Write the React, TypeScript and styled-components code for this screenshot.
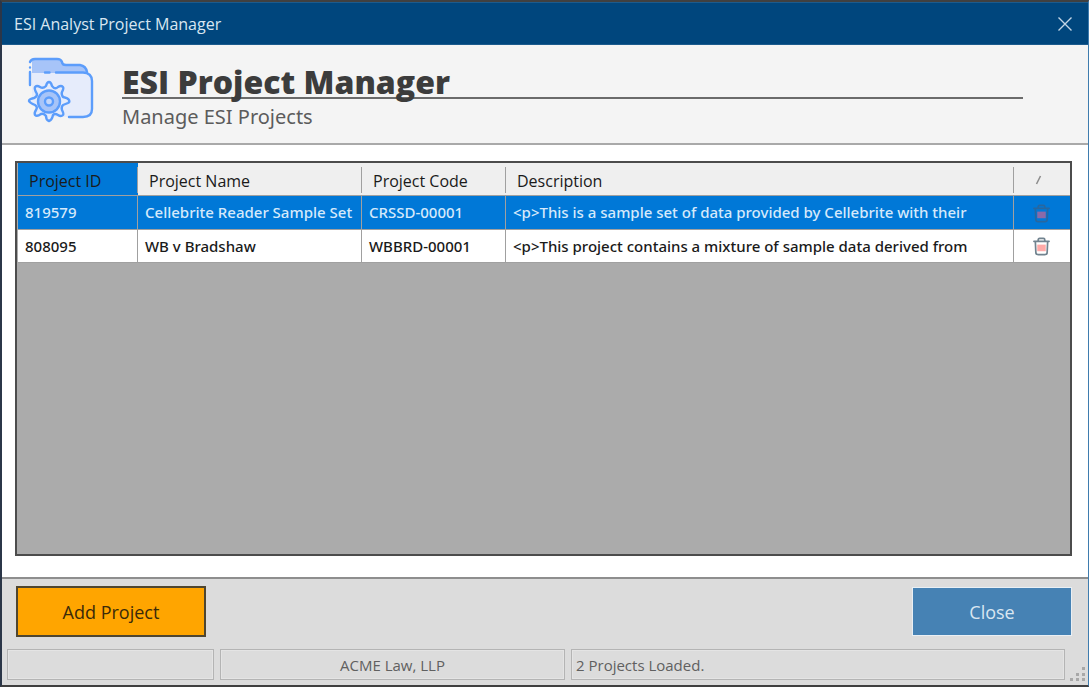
import React from "react";
import styled, { createGlobalStyle } from "styled-components";

const GlobalStyle = createGlobalStyle`
  *, *::before, *::after { box-sizing: border-box; }
  body {
    margin: 0;
    font-family: "Open Sans", "Noto Sans", sans-serif;
    font-size: 16px;
    line-height: 20px;
    color: #1a1a1a;
  }
`;

const Window = styled.div`
  display: flex;
  flex-direction: column;
  min-height: 100vh;
  background: #ffffff;
  border: 2px solid #404040;
  border-left-color: #2b3648;
  border-right: 1px solid #3f7cae;
`;

const TitleBar = styled.header`
  display: flex;
  align-items: center;
  justify-content: space-between;
  height: 43px;
  padding: 0 16px 0 12px;
  background: #00467d;
  border-top: 1px solid #1c5b8d;
  border-bottom: 1px solid #1c5b8d;
  color: #d9e6f1;
`;

const IconButton = styled.button`
  display: inline-flex;
  align-items: center;
  justify-content: center;
  padding: 0;
  border: 0;
  background: none;
  color: inherit;
  vertical-align: middle;
  cursor: pointer;
`;

const Banner = styled.section`
  display: flex;
  align-items: flex-start;
  height: 100px;
  padding: 12px 65px 0 24px;
  background: #f4f4f4;
  border-bottom: 2px solid #a9a9a9;
`;

const BannerText = styled.div`
  flex: 1;
  margin-left: 28px;
  padding-top: 8px;
`;

const Heading = styled.h1`
  margin: 0;
  height: 34px;
  border-bottom: 2px solid #6b6b6b;
  font-size: 32px;
  line-height: 34px;
  font-weight: 800;
  color: #3c3c3c;
  white-space: nowrap;
`;

const Subheading = styled.p`
  margin: 3px 0 0;
  font-family: "Noto Sans", sans-serif;
  font-size: 20px;
  line-height: 30px;
  color: #5c5c5c;
`;

const Content = styled.main`
  display: flex;
  flex: 1;
  padding: 16px 16px 21px 13px;
`;

const GridFrame = styled.div`
  flex: 1;
  min-width: 0;
  padding: 0 0 0 1px;
  background: #ababab;
  border: 2px solid #4c4c4c;
`;

const Grid = styled.table`
  width: 100%;
  table-layout: fixed;
  border-collapse: separate;
  border-spacing: 0;
`;

const Column = styled.col<{ $width?: number }>`
  width: ${(p) => (p.$width ? `${p.$width}px` : "auto")};
`;

const HeaderCell = styled.th<{ $active?: boolean }>`
  height: 33px;
  padding: 4px 0 2px;
  background: ${(p) => (p.$active ? "#0078d7" : "#efefef")};
  border-bottom: 1px solid #a0a0a0;
  font-weight: 400;
  text-align: left;
`;

const HeaderLabel = styled.span<{ $last?: boolean }>`
  display: flex;
  align-items: center;
  justify-content: ${(p) => (p.$last ? "center" : "flex-start")};
  height: 26px;
  padding: ${(p) => (p.$last ? "0 6px 0 0" : "1px 0 0 11px")};
  border-right: ${(p) => (p.$last ? "0" : "1px solid #a0a0a0")};
`;

const Row = styled.tr<{ $selected?: boolean }>`
  height: ${(p) => (p.$selected ? "34px" : "33px")};
  background: ${(p) => (p.$selected ? "#0078d7" : "#ffffff")};
  color: ${(p) => (p.$selected ? "#d5e9fb" : "#1a1a1a")};
`;

const Cell = styled.td<{ $last?: boolean }>`
  padding: 0 ${(p) => (p.$last ? "2px" : "0")} 1px ${(p) => (p.$last ? "0" : "7px")};
  border-right: ${(p) => (p.$last ? "0" : "1px solid #a0a0a0")};
  border-bottom: 1px solid #a0a0a0;
  text-align: ${(p) => (p.$last ? "center" : "left")};
  font-family: "Noto Sans", sans-serif;
  font-size: 15px;
  font-weight: 500;
  white-space: nowrap;
  overflow: hidden;
`;

const Footer = styled.footer`
  background: #dcdcdc;
  border-top: 2px solid #8e8e8e;
`;

const Actions = styled.div`
  display: flex;
  align-items: center;
  justify-content: space-between;
  padding: 7px 16px 0 14px;
`;

const ActionButton = styled.button<{ $primary?: boolean }>`
  width: ${(p) => (p.$primary ? "190px" : "160px")};
  height: ${(p) => (p.$primary ? "51px" : "49px")};
  padding: 0;
  background: ${(p) => (p.$primary ? "#ffa500" : "#4682b4")};
  border: ${(p) => (p.$primary ? "2px solid #4f4630" : "1px solid #e9eff4")};
  color: ${(p) => (p.$primary ? "#3a2a0a" : "#d9e6f1")};
  font: inherit;
  font-size: 18px;
  cursor: pointer;
`;

const StatusBar = styled.div`
  display: grid;
  grid-template-columns: minmax(0, 207fr) minmax(0, 345fr) minmax(0, 494fr);
  gap: 6px;
  padding: 12px 23px 5px 5px;
  position: relative;
`;

const StatusPanel = styled.div<{ $centered?: boolean }>`
  height: 31px;
  padding: 0 4px;
  border: 1px solid #b4b4b4;
  outline: 1px solid #e4e4e4;
  outline-offset: -2px;
  font-size: 15px;
  font-weight: 500;
  line-height: 30px;
  text-align: ${(p) => (p.$centered ? "center" : "left")};
  color: #606060;
  white-space: nowrap;
`;

const Grip = styled.svg`
  position: absolute;
  right: 2px;
  bottom: 3px;
`;

const FolderGearIcon = () => (
  <svg width="68" height="66" viewBox="0 0 68 66" fill="none" aria-hidden="true">
    <path d="M6 16H58Q66 17 66 24V52Q66 60 57 60H25L6 40Z" fill="#e6ecfb" />
    <path d="M6 16V3H31Q35 3 36 8H54Q61 9 61 16Z" fill="#a7c4f8" />
    <g stroke="#5c9dfb" strokeWidth="2.400" strokeLinecap="round" strokeLinejoin="round">
      <path d="M4 5Q5 2 9 2H31Q35 2 36 5Q36 8 40 8H54Q60 9 61 15" />
      <path d="M30 15.500H57Q66 16 66 24V52Q66 60 57 60H43" />
      <path d="M19 15.500H23.500M4 10.500V10.600M4 15V28" />
      <path
        fill="#e6ecfb"
        d="M20 29Q21 25 23 25Q25 25 26 29L28 31Q30 32 32 30Q35 28 37 30Q38 31 36 35Q35 37 37 40Q42 41 43 43Q44 45 42 46L37 48Q35 50 36 53Q38 57 37 58Q35 60 32 58Q29 56 27 58Q26 63 23 64Q20 63 20 59Q18 56 15 57Q11 60 9 58Q8 56 10 53Q12 50 9 48Q4 46 3 44Q3 42 8 41Q11 40 11 37Q8 32 9 30Q11 28 14 30Q17 32 20 29Z"
      />
      <circle cx="23" cy="44.500" r="11" fill="#a7c4f8" />
      <circle cx="23" cy="44.500" r="4" fill="#c4d7fa" />
    </g>
  </svg>
);

const TrashIcon = ({ dimmed }: { dimmed?: boolean }) => (
  <svg width="17" height="19" viewBox="0 0 18 20" fill="none" aria-hidden="true">
    <rect x="4.500" y="8" width="9" height="7" fill={dimmed ? "#8a6aa8" : "#ffaaa8"} />
    <path
      d="M1 4.500H17M5.500 4V3Q5.500 1.500 7 1.500H11Q12.500 1.500 12.500 3V4M2.500 5L3 16Q3 18.500 5.500 18.500H12.500Q15 18.500 15 16L15.500 5"
      stroke={dimmed ? "#2767a0" : "#71838f"}
      strokeWidth="1.800"
      strokeLinecap="round"
    />
  </svg>
);

const projects = [
  {
    id: "819579",
    name: "Cellebrite Reader Sample Set",
    code: "CRSSD-00001",
    description: "<p>This is a sample set of data provided by Cellebrite with their",
    selected: true,
  },
  {
    id: "808095",
    name: "WB v Bradshaw",
    code: "WBBRD-00001",
    description: "<p>This project contains a mixture of sample data derived from",
    selected: false,
  },
];

export default function App() {
  return (
    <>
      <GlobalStyle />
      <Window>
        <TitleBar>
          <span>ESI Analyst Project Manager</span>
          <IconButton aria-label="Close window">
            <svg width="14" height="14" viewBox="0 0 14 14" aria-hidden="true">
              <path d="M0.500 0.500L13.500 13.500M13.500 0.500L0.500 13.500" stroke="#c3d5e5" strokeWidth="1.400" />
            </svg>
          </IconButton>
        </TitleBar>
        <Banner>
          <FolderGearIcon />
          <BannerText>
            <Heading>ESI Project Manager</Heading>
            <Subheading>Manage ESI Projects</Subheading>
          </BannerText>
        </Banner>
        <Content>
          <GridFrame>
            <Grid>
              <colgroup>
                <Column $width={120} />
                <Column $width={224} />
                <Column $width={144} />
                <Column />
                <Column $width={56} />
              </colgroup>
              <thead>
                <tr>
                  <HeaderCell $active>
                    <HeaderLabel>Project ID</HeaderLabel>
                  </HeaderCell>
                  <HeaderCell>
                    <HeaderLabel>Project Name</HeaderLabel>
                  </HeaderCell>
                  <HeaderCell>
                    <HeaderLabel>Project Code</HeaderLabel>
                  </HeaderCell>
                  <HeaderCell>
                    <HeaderLabel>Description</HeaderLabel>
                  </HeaderCell>
                  <HeaderCell aria-label="Delete">
                    <HeaderLabel $last>
                      <svg width="12" height="12" viewBox="0 0 12 12" aria-hidden="true">
                        <path d="M3.500 10L7.500 2" stroke="#8c8c8c" strokeWidth="1.500" />
                      </svg>
                    </HeaderLabel>
                  </HeaderCell>
                </tr>
              </thead>
              <tbody>
                {projects.map((project) => (
                  <Row key={project.id} $selected={project.selected}>
                    <Cell>{project.id}</Cell>
                    <Cell>{project.name}</Cell>
                    <Cell>{project.code}</Cell>
                    <Cell>{project.description}</Cell>
                    <Cell $last>
                      <IconButton aria-label={`Delete ${project.name}`}>
                        <TrashIcon dimmed={project.selected} />
                      </IconButton>
                    </Cell>
                  </Row>
                ))}
              </tbody>
            </Grid>
          </GridFrame>
        </Content>
        <Footer>
          <Actions>
            <ActionButton $primary>Add Project</ActionButton>
            <ActionButton>Close</ActionButton>
          </Actions>
          <StatusBar>
            <StatusPanel />
            <StatusPanel $centered>ACME Law, LLP</StatusPanel>
            <StatusPanel>2 Projects Loaded.</StatusPanel>
            <Grip width="16" height="16" viewBox="0 0 16 16" fill="#a8a8a8" aria-hidden="true">
              <path d="M12 1h3v3h-3zM6 7h3v3h-3zM12 7h3v3h-3zM0 12h3v3h-3zM6 12h3v3h-3zM12 12h3v3h-3z" />
            </Grip>
          </StatusBar>
        </Footer>
      </Window>
    </>
  );
}
